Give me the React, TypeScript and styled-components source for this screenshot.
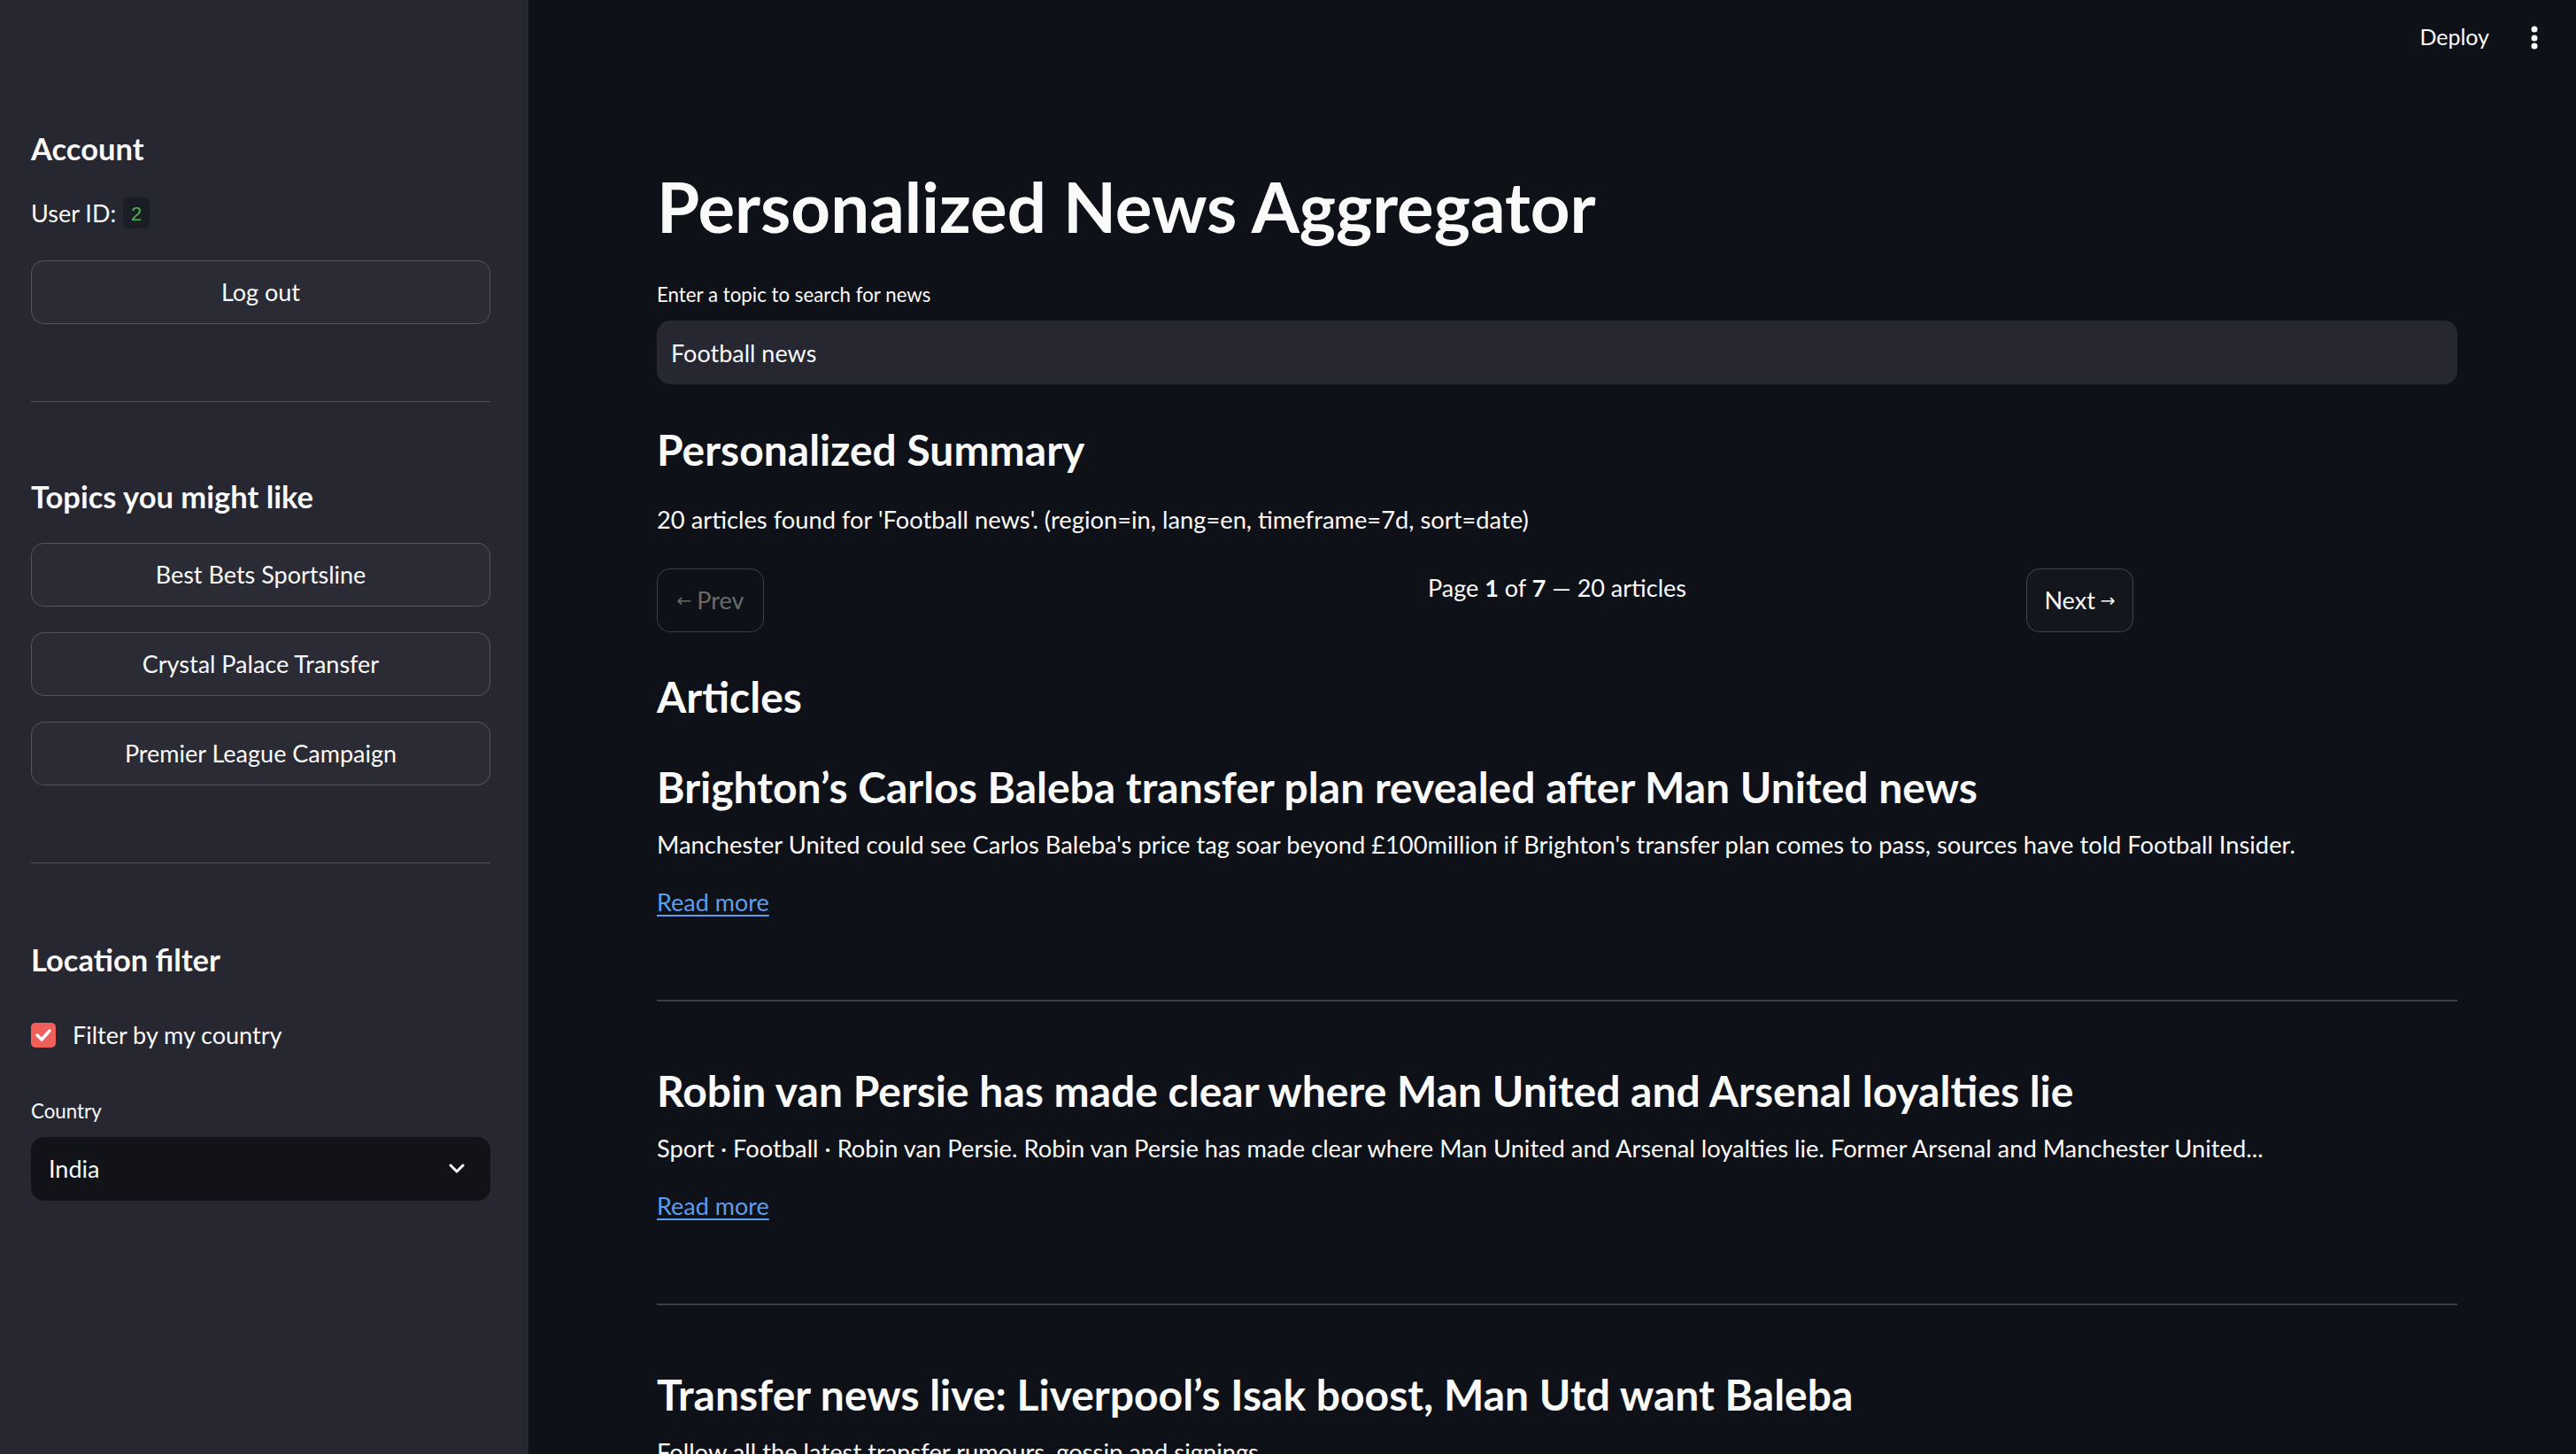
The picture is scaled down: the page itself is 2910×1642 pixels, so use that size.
import React from 'react';
import styled, { createGlobalStyle } from 'styled-components';

const Global = createGlobalStyle`
  html, body { margin: 0; padding: 0; background: #0e1117; }
  body { font-family: Lato, "Noto Sans", sans-serif; color: #fafafa; -webkit-font-smoothing: antialiased; }
  * { box-sizing: border-box; }
  p, h1, h2, h3 { margin: 0; }
`;

const Page = styled.div`
  display: flex;
  width: 2910px;
  height: 1642px;
  overflow: hidden;
  background: #0e1117;
`;

const Sidebar = styled.aside`
  width: 597px;
  flex-shrink: 0;
  background: #262730;
  padding: 148px 43px 0 35px;
  display: flex;
  flex-direction: column;
`;

const SideHeading = styled.h3<{ $mt?: number }>`
  font-size: 34.5px;
  line-height: 39.6px;
  font-weight: 700;
  margin-top: ${(p) => p.$mt ?? 0}px;
`;

const UserRow = styled.div`
  margin-top: 31px;
  display: flex;
  align-items: center;
  gap: 8px;
  font-size: 27px;
  line-height: 43px;
`;

const CodeBadge = styled.code`
  display: inline-flex;
  align-items: center;
  justify-content: center;
  width: 30px;
  height: 35px;
  padding-top: 7px;
  border-radius: 6px;
  background: #1b1d25;
  color: #4fae52;
  font-family: "Liberation Mono", monospace;
  font-size: 22px;
`;

const OutlineButton = styled.button<{ $bg?: string; $muted?: boolean; $w?: number; $mt?: number }>`
  display: flex;
  align-items: center;
  justify-content: center;
  gap: 6px;
  height: 72px;
  width: ${(p) => (p.$w ? `${p.$w}px` : '100%')};
  margin-top: ${(p) => p.$mt ?? 0}px;
  padding: 0 20px;
  border: 1.5px solid rgba(250, 250, 250, 0.2);
  border-radius: 15px;
  background: ${(p) => p.$bg ?? '#2a2b35'};
  color: ${(p) => (p.$muted ? 'rgba(250,250,250,0.4)' : '#fafafa')};
  font-family: inherit;
  font-size: 27px;
  white-space: nowrap;
`;

const ButtonStack = styled.div`
  margin-top: 32px;
  display: flex;
  flex-direction: column;
  gap: 29px;
`;

const Rule = styled.hr<{ $mt: number }>`
  margin: ${(p) => p.$mt}px 0 0 0;
  border: none;
  height: 1.5px;
  background: rgba(250, 250, 250, 0.2);
  flex-shrink: 0;
`;

const CheckRow = styled.label`
  margin-top: 47px;
  height: 36px;
  display: flex;
  align-items: center;
  gap: 19px;
  font-size: 27px;
`;

const CheckBox = styled.span`
  width: 28px;
  height: 28px;
  border-radius: 5px;
  background: #f0605a;
  display: flex;
  align-items: center;
  justify-content: center;
`;

const FieldLabel = styled.div<{ $mt: number }>`
  margin-top: ${(p) => p.$mt}px;
  font-size: 22.3px;
  line-height: 32px;
`;

const SelectBox = styled.div`
  margin-top: 13px;
  height: 72px;
  border-radius: 15px;
  background: #111319;
  display: flex;
  align-items: center;
  justify-content: space-between;
  padding: 0 28px 0 20px;
  font-size: 27px;
`;

const Main = styled.main`
  flex: 1;
  display: flex;
  flex-direction: column;
  min-width: 0;
`;

const Toolbar = styled.header`
  height: 86px;
  flex-shrink: 0;
  display: flex;
  justify-content: flex-end;
  align-items: flex-start;
  padding: 26px 42px 0 0;
  gap: 46px;
`;

const DeployText = styled.span`
  font-size: 25px;
  line-height: 30px;
`;

const Content = styled.div`
  padding: 102px 134px 0 145px;
  display: flex;
  flex-direction: column;
`;

const Title = styled.h1`
  font-size: 78px;
  line-height: 90px;
  font-weight: 700;
  white-space: nowrap;
`;

const InputBox = styled.div`
  margin-top: 13px;
  height: 72px;
  border-radius: 15px;
  background: #262730;
  display: flex;
  align-items: center;
  padding-left: 16px;
  font-size: 27px;
`;

const SectionHeading = styled.h2<{ $mt: number }>`
  margin-top: ${(p) => p.$mt}px;
  font-size: 48px;
  line-height: 50.4px;
  font-weight: 700;
`;

const BodyText = styled.p<{ $mt: number }>`
  margin-top: ${(p) => p.$mt}px;
  font-size: 27.3px;
  line-height: 43.2px;
  white-space: nowrap;
`;

const Pager = styled.div`
  margin-top: 33px;
  display: grid;
  grid-template-columns: 1fr 2fr 1fr;
  gap: 43px;
  align-items: start;
`;

const PagerInfo = styled.p`
  font-size: 27px;
  line-height: 43.2px;
  text-align: center;
  b { font-weight: 700; }
`;

const Arrow = styled.span`
  font-family: "DejaVu Sans", sans-serif;
  font-size: 20px;
`;

const Article = styled.article<{ $mt: number }>`
  margin-top: ${(p) => p.$mt}px;
  display: flex;
  flex-direction: column;
`;

const ArticleTitle = styled.h3`
  font-size: 48px;
  line-height: 54px;
  font-weight: 700;
  white-space: nowrap;
`;

const ReadMore = styled.a`
  margin-top: 22px;
  align-self: flex-start;
  font-size: 27px;
  line-height: 43.2px;
  color: #5b9ef0;
  text-decoration: underline;
  text-underline-offset: 4px;
`;

const Chevron = () => (
  <svg width="20" height="12" viewBox="0 0 20 12">
    <polyline points="3,2 10,9 17,2" fill="none" stroke="#fafafa" strokeWidth="3" strokeLinecap="round" strokeLinejoin="round" />
  </svg>
);

const Kebab = () => (
  <svg width="10" height="30" viewBox="0 0 10 30" style={{ marginTop: 3 }}>
    <circle cx="5" cy="4" r="3.5" fill="#fafafa" />
    <circle cx="5" cy="14" r="3.5" fill="#fafafa" />
    <circle cx="5" cy="23" r="3.5" fill="#fafafa" />
  </svg>
);

const Check = () => (
  <svg width="20" height="16" viewBox="0 0 20 16">
    <polyline points="3,8 8,13 17,3" fill="none" stroke="#fff" strokeWidth="3.5" strokeLinecap="round" strokeLinejoin="round" />
  </svg>
);

const articles = [
  {
    title: 'Brighton’s Carlos Baleba transfer plan revealed after Man United news',
    desc: "Manchester United could see Carlos Baleba's price tag soar beyond £100million if Brighton's transfer plan comes to pass, sources have told Football Insider.",
  },
  {
    title: 'Robin van Persie has made clear where Man United and Arsenal loyalties lie',
    desc: 'Sport · Football · Robin van Persie. Robin van Persie has made clear where Man United and Arsenal loyalties lie. Former Arsenal and Manchester United...',
  },
  {
    title: 'Transfer news live: Liverpool’s Isak boost, Man Utd want Baleba',
    desc: 'Follow all the latest transfer rumours, gossip and signings',
  },
];

export default function App() {
  return (
    <>
      <Global />
      <Page>
        <Sidebar>
          <SideHeading>Account</SideHeading>
          <UserRow>
            User ID: <CodeBadge>2</CodeBadge>
          </UserRow>
          <OutlineButton $mt={32}>Log out</OutlineButton>
          <Rule $mt={87} />
          <SideHeading $mt={87}>Topics you might like</SideHeading>
          <ButtonStack>
            <OutlineButton>Best Bets Sportsline</OutlineButton>
            <OutlineButton>Crystal Palace Transfer</OutlineButton>
            <OutlineButton>Premier League Campaign</OutlineButton>
          </ButtonStack>
          <Rule $mt={87} />
          <SideHeading $mt={89}>Location filter</SideHeading>
          <CheckRow>
            <CheckBox>
              <Check />
            </CheckBox>
            Filter by my country
          </CheckRow>
          <FieldLabel $mt={52}>Country</FieldLabel>
          <SelectBox>
            India
            <Chevron />
          </SelectBox>
        </Sidebar>
        <Main>
          <Toolbar>
            <DeployText>Deploy</DeployText>
            <Kebab />
          </Toolbar>
          <Content>
            <Title>Personalized News Aggregator</Title>
            <FieldLabel $mt={39}>Enter a topic to search for news</FieldLabel>
            <InputBox>Football news</InputBox>
            <SectionHeading $mt={49}>Personalized Summary</SectionHeading>
            <BodyText $mt={32}>
              20 articles found for 'Football news'. (region=in, lang=en, timeframe=7d, sort=date)
            </BodyText>
            <Pager>
              <OutlineButton $w={121} $bg="#0e1117" $muted>
                <Arrow>←</Arrow>Prev
              </OutlineButton>
              <PagerInfo>
                Page <b>1</b> of <b>7</b> — 20 articles
              </PagerInfo>
              <OutlineButton $w={121} $bg="#13161d">
                Next<Arrow>→</Arrow>
              </OutlineButton>
            </Pager>
            <SectionHeading $mt={48}>Articles</SectionHeading>
            {articles.map((a, i) => (
              <React.Fragment key={i}>
                <Article $mt={i === 0 ? 50 : 74}>
                  <ArticleTitle>{a.title}</ArticleTitle>
                  <BodyText $mt={16}>{a.desc}</BodyText>
                  <ReadMore href="#">Read more</ReadMore>
                </Article>
                {i < articles.length - 1 && <Rule $mt={89} />}
              </React.Fragment>
            ))}
          </Content>
        </Main>
      </Page>
    </>
  );
}
